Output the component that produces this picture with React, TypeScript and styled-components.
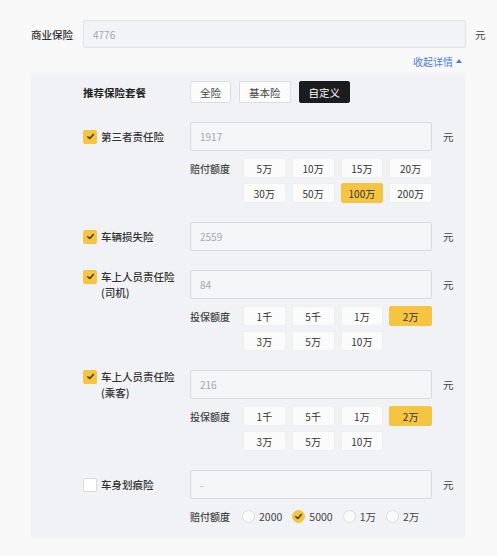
import styled, { createGlobalStyle } from "styled-components";

const GlobalStyle = createGlobalStyle`
  body {
    margin: 0;
    background: #f8f8f9;
    font-family: "Noto Sans CJK SC", "Noto Sans", sans-serif;
    color: #333;
  }
`;

const Page = styled.div`
  width: 497px;
  height: 556px;
  box-sizing: border-box;
  padding: 20px 10px 0 31px;
`;

const TopRow = styled.div`
  display: grid;
  grid-template-columns: 52px 383px 21px;
  align-items: center;
`;

const TopLabel = styled.span`
  font-size: 10.5px;
  font-weight: 500;
  color: #333;
`;

const Field = styled.div<{ $top?: boolean }>`
  height: ${(p) => (p.$top ? 28 : 29)}px;
  box-sizing: border-box;
  border: 1px solid ${(p) => (p.$top ? "#e1e2e6" : "#d8dadf")};
  background: ${(p) => (p.$top ? "#f2f3f6" : "#f4f5f7")};
  border-radius: 2px;
  display: flex;
  align-items: center;
  padding: 0 9px;
  font-size: 10px;
  color: #a4a6ac;
`;

const Unit = styled.span<{ $pad: number }>`
  padding-left: ${(p) => p.$pad}px;
  font-size: 10.5px;
  color: #444;
`;

const LinkRow = styled.div`
  display: flex;
  justify-content: flex-end;
  padding-right: 25px;
  margin: 6px 0 5px;
  height: 14px;
  align-items: center;
`;

const Link = styled.span`
  font-size: 10px;
  color: #4a7be0;
  display: flex;
  align-items: center;
  gap: 3px;
`;

const Caret = styled.span`
  width: 0;
  height: 0;
  border-left: 3px solid transparent;
  border-right: 3px solid transparent;
  border-bottom: 4px solid #4a7be0;
`;

const Panel = styled.div`
  width: 434px;
  box-sizing: border-box;
  background: #f1f2f5;
  border-radius: 2px;
  padding: 8px 0 12px 52px;
  display: flex;
  flex-direction: column;
  gap: 19px;
`;

const Row = styled.div`
  display: grid;
  grid-template-columns: 107px 242px 33px;
  align-items: center;
`;

const Section = styled.div`
  display: flex;
  flex-direction: column;
`;

const Title = styled.span`
  font-size: 10.5px;
  font-weight: 700;
  color: #222;
`;

const Packages = styled.div`
  display: flex;
  gap: 8px;
`;

const PackageButton = styled.div<{ $active?: boolean }>`
  height: 22px;
  box-sizing: border-box;
  padding: 0 9px;
  display: flex;
  align-items: center;
  font-size: 10.5px;
  border-radius: 2px;
  border: 1px solid ${(p) => (p.$active ? "#1b1c1f" : "#dcdde0")};
  background: ${(p) => (p.$active ? "#1b1c1f" : "#fbfbfb")};
  color: ${(p) => (p.$active ? "#fff" : "#444")};
`;

/* fixed to the field height so a two-line name overflows evenly */
const ItemCell = styled.div`
  height: 29px;
  display: flex;
  align-items: center;
`;

const ItemLabel = styled.div`
  display: flex;
  align-items: flex-start;
  gap: 4px;
`;

const Box = styled.span<{ $checked?: boolean }>`
  flex: none;
  width: 14px;
  height: 14px;
  margin-top: 1px;
  box-sizing: border-box;
  border-radius: 2px;
  border: 1px solid ${(p) => (p.$checked ? "#f5c441" : "#d9d9dc")};
  background: ${(p) => (p.$checked ? "#f5c441" : "#fff")};
  display: flex;
  align-items: center;
  justify-content: center;
`;

const Name = styled.div`
  font-size: 10.5px;
  font-weight: 500;
  line-height: 16px;
  color: #333;
`;

const Options = styled.div`
  margin: 7px 0 0 107px;
  width: 242px;
  display: grid;
  grid-template-columns: 47px repeat(4, 1fr);
  column-gap: 6px;
  row-gap: 5px;
`;

const OptLabel = styled.span`
  font-size: 10px;
  font-weight: 500;
  color: #444;
  height: 20px;
  display: flex;
  align-items: center;
`;

const Opt = styled.div<{ $selected?: boolean; $col: number }>`
  grid-column: ${(p) => p.$col};
  height: 20px;
  box-sizing: border-box;
  border-radius: 2px;
  border: 1px solid ${(p) => (p.$selected ? "#f5c441" : "#eeeff2")};
  background: ${(p) => (p.$selected ? "#f5c441" : "#fbfbfc")};
  display: flex;
  align-items: center;
  justify-content: center;
  font-size: 10px;
  color: #333;
`;

const Radios = styled.div`
  margin: 7px 0 0 107px;
  height: 20px;
  display: flex;
  align-items: center;
`;

const RadioLabelCell = styled(OptLabel)`
  width: 52px;
`;

const RadioItem = styled.div`
  display: flex;
  align-items: center;
  gap: 4px;
  margin-right: 10px;
  font-size: 10.5px;
  color: #444;
`;

const Circle = styled.span<{ $checked?: boolean }>`
  width: 13px;
  height: 13px;
  box-sizing: border-box;
  border-radius: 50%;
  border: 1px solid ${(p) => (p.$checked ? "#f5c441" : "#dadbde")};
  background: ${(p) => (p.$checked ? "#f5c441" : "#fafafa")};
  display: flex;
  align-items: center;
  justify-content: center;
`;

const Check = () => (
  <svg width="9" height="9" viewBox="0 0 10 10">
    <polyline
      points="2,5.2 4.2,7.3 8.2,2.8"
      fill="none"
      stroke="#3a3320"
      strokeWidth="1.6"
      strokeLinecap="round"
      strokeLinejoin="round"
    />
  </svg>
);

type Item = {
  name: string;
  sub?: string;
  value: string;
  checked: boolean;
  optLabel?: string;
  options?: string[];
  selected?: string;
  radios?: string[];
};

const items: Item[] = [
  {
    name: "第三者责任险",
    value: "1917",
    checked: true,
    optLabel: "赔付额度",
    options: ["5万", "10万", "15万", "20万", "30万", "50万", "100万", "200万"],
    selected: "100万",
  },
  { name: "车辆损失险", value: "2559", checked: true },
  {
    name: "车上人员责任险",
    sub: "(司机)",
    value: "84",
    checked: true,
    optLabel: "投保额度",
    options: ["1千", "5千", "1万", "2万", "3万", "5万", "10万"],
    selected: "2万",
  },
  {
    name: "车上人员责任险",
    sub: "(乘客)",
    value: "216",
    checked: true,
    optLabel: "投保额度",
    options: ["1千", "5千", "1万", "2万", "3万", "5万", "10万"],
    selected: "2万",
  },
  {
    name: "车身划痕险",
    value: "-",
    checked: false,
    optLabel: "赔付额度",
    radios: ["2000", "5000", "1万", "2万"],
    selected: "5000",
  },
];

const packages = ["全险", "基本险", "自定义"];

export default function App() {
  return (
    <>
      <GlobalStyle />
      <Page>
        <TopRow>
          <TopLabel>商业保险</TopLabel>
          <Field $top>4776</Field>
          <Unit $pad={9}>元</Unit>
        </TopRow>
        <LinkRow>
          <Link>
            收起详情
            <Caret />
          </Link>
        </LinkRow>
        <Panel>
          <Row>
            <Title>推荐保险套餐</Title>
            <Packages>
              {packages.map((p) => (
                <PackageButton key={p} $active={p === "自定义"}>
                  {p}
                </PackageButton>
              ))}
            </Packages>
          </Row>
          {items.map((item, i) => (
            <Section key={i}>
              <Row>
                <ItemCell>
                  <ItemLabel>
                    <Box $checked={item.checked}>{item.checked && <Check />}</Box>
                    <Name>
                      {item.name}
                      {item.sub && <div>{item.sub}</div>}
                    </Name>
                  </ItemLabel>
                </ItemCell>
                <Field>{item.value}</Field>
                <Unit $pad={11}>元</Unit>
              </Row>
              {item.options && (
                <Options>
                  <OptLabel>{item.optLabel}</OptLabel>
                  {item.options.map((o, j) => (
                    <Opt key={o} $col={(j % 4) + 2} $selected={o === item.selected}>
                      {o}
                    </Opt>
                  ))}
                </Options>
              )}
              {item.radios && (
                <Radios>
                  <RadioLabelCell>{item.optLabel}</RadioLabelCell>
                  {item.radios.map((r) => (
                    <RadioItem key={r}>
                      <Circle $checked={r === item.selected}>
                        {r === item.selected && <Check />}
                      </Circle>
                      {r}
                    </RadioItem>
                  ))}
                </Radios>
              )}
            </Section>
          ))}
        </Panel>
      </Page>
    </>
  );
}
